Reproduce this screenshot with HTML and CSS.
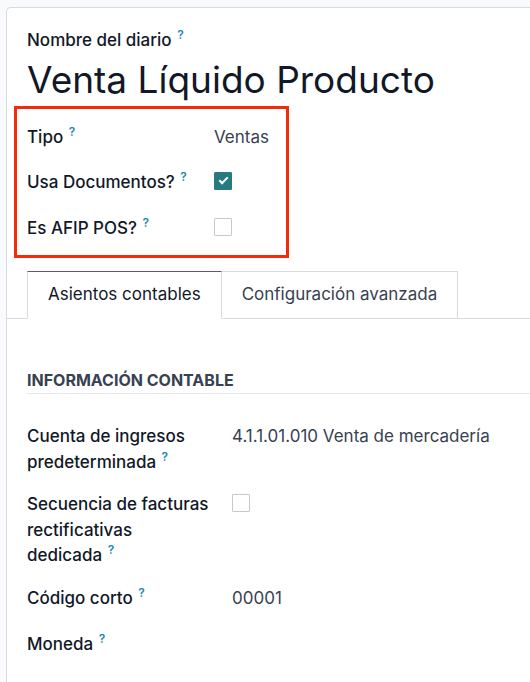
FILE: index.html
```html
<!DOCTYPE html>
<html lang="es">
<head>
    <meta charset="UTF-8">
    <meta name="viewport" content="width=device-width, initial-scale=1.0">
    <title>Diario</title>
    <link rel="stylesheet" href="styles.css">
</head>
<body>
    <div class="hoja">
        <!-- Nombre del diario -->
        <div class="titulo">
            <label class="etiqueta">Nombre del diario <sup>?</sup></label>
            <h1>Venta Líquido Producto</h1>
        </div>

        <!-- Campos resaltados -->
        <div class="resaltado">
            <div class="grupo">
                <div class="etiqueta">Tipo <sup>?</sup></div>
                <div class="valor">Ventas</div>
                <div class="etiqueta">Usa Documentos? <sup>?</sup></div>
                <div class="valor"><span class="check marcado"></span></div>
                <div class="etiqueta">Es AFIP POS? <sup>?</sup></div>
                <div class="valor"><span class="check"></span></div>
            </div>
        </div>

        <!-- Pestañas -->
        <ul class="pestanas">
            <li class="activa">Asientos contables</li>
            <li>Configuración avanzada</li>
        </ul>

        <div class="contenido">
            <h3 class="seccion">Información contable</h3>
            <div class="grupo ancho">
                <div class="etiqueta">Cuenta de ingresos predeterminada&nbsp;<sup>?</sup></div>
                <div class="valor">4.1.1.01.010 Venta de mercadería</div>
                <div class="etiqueta">Secuencia de facturas rectificativas dedicada&nbsp;<sup>?</sup></div>
                <div class="valor"><span class="check"></span></div>
                <div class="etiqueta">Código corto <sup>?</sup></div>
                <div class="valor codigo">00001</div>
                <div class="etiqueta">Moneda <sup>?</sup></div>
                <div class="valor"></div>
            </div>
        </div>
    </div>
</body>
</html>
```

FILE: styles.css
```css
/* Base */
body {
    margin: 0;
    padding: 7px 0 0 6px;
    background-color: #f9fafb;
    font-family: Inter, "Liberation Sans", sans-serif;
    color: #111827;
    overflow: hidden;
    height: 682px;
    box-sizing: border-box;
}

/* Hoja del formulario */
.hoja {
    background-color: #fff;
    border: 1px solid #d8dadd;
    border-right: none;
    border-bottom: none;
    border-top-left-radius: 5px;
    padding: 20px 0 0 20px;
    min-height: 700px;
}

.etiqueta {
    font-size: 17px;
    font-weight: 500;
    color: #111827;
    line-height: 25.5px;
}

sup {
    color: #1d87ae;
    font-size: 12px;
    font-weight: 600;
    vertical-align: top;
    position: relative;
    top: -6px;
    margin-left: 1px;
}

h1 {
    margin: 0;
    font-size: 37px;
    font-weight: 400;
    line-height: 52px;
    color: #111827;
}

/* Recuadro rojo */
.resaltado {
    margin: 0 0 0 -13px;
    width: 259px;
    border: 3px solid #f52a0c;
    padding: 16px 0 14px 10px;
}

.grupo {
    display: grid;
    grid-template-columns: 187px 1fr;
    row-gap: 20px;
}

.grupo.ancho {
    grid-template-columns: 205px 1fr;
    row-gap: 17px;
}

.valor {
    font-size: 17px;
    line-height: 25.5px;
    color: #374151;
}

/* el campo de código es un poco más alto */
.valor.codigo {
    padding-bottom: 4px;
}

.grupo .etiqueta {
    padding-right: 12px;
}

.grupo.ancho .etiqueta {
    padding-right: 22px;
}

/* Casillas */
.check {
    display: inline-block;
    width: 16px;
    height: 16px;
    border: 1px solid #c6c9cc;
    border-radius: 1px;
    vertical-align: middle;
    position: relative;
    top: -2px;
}

.check.marcado {
    background-color: #277b7f;
    border-color: #277b7f;
}

.check.marcado::after {
    content: "";
    position: absolute;
    left: 4px;
    top: 4px;
    width: 7px;
    height: 3px;
    border-left: 2px solid #fff;
    border-bottom: 2px solid #fff;
    transform: rotate(-45deg);
}

/* Pestañas */
.pestanas {
    list-style: none;
    margin: 13px 0 0 -21px;
    padding: 0 0 0 21px;
    display: flex;
    border-bottom: 1px solid #d8dadd;
}

.pestanas li {
    font-size: 17px;
    color: #374151;
    padding: 10px 20px 11px;
    border: 1px solid #d8dadd;
    border-bottom: none;
    border-left: none;
    line-height: 25px;
    margin-bottom: -1px;
}

.pestanas li.activa {
    color: #111827;
    background-color: #fff;
    border-left: 1px solid #d8dadd;
    border-top-color: #71506a;
    border-bottom: 1px solid #fff;
}

/* Contenido de la pestaña */
.contenido {
    padding-top: 51px;
}

.seccion {
    margin: 0 0 30px;
    font-size: 16px;
    font-weight: 700;
    text-transform: uppercase;
    color: #374151;
    padding-bottom: 3px;
    border-bottom: 1px solid #e5e7eb;
    line-height: 20px;
}
```
